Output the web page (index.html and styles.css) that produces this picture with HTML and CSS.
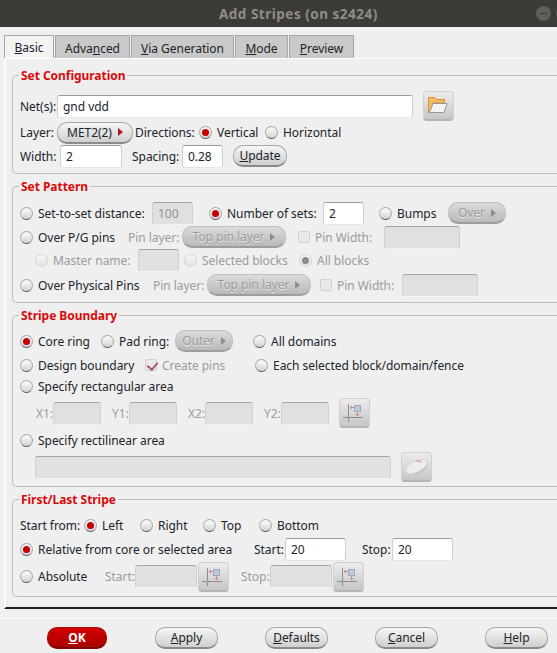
FILE: index.html
```html
<!DOCTYPE html>
<html lang="en">
<head>
    <meta charset="UTF-8">
    <meta name="viewport" content="width=device-width, initial-scale=1.0">
    <title>Add Stripes (on s2424)</title>
    <link rel="stylesheet" href="styles.css">
</head>
<body>
    <svg class="defs" width="0" height="0">
        <symbol id="ico-box" viewBox="0 0 31 30">
            <path d="M9.500 6V24M4 19.500H24" stroke="#8b8b8b" fill="none"/>
            <rect x="8" y="18" width="3" height="3" fill="#a9a9a9"/>
            <path d="M11 9.500H16M11 9.500l2-1.500M11 9.500l2 1.500M18.500 13.500V18M18.500 18l-1.500-2M18.500 18l1.500-2" stroke="#d08c8c" fill="none"/>
            <rect x="15.500" y="7.500" width="6" height="6" fill="#bcc8dc" stroke="#9aa8c0"/>
        </symbol>
    </svg>

    <div class="titlebar">
        <span class="title">Add Stripes (on s2424)</span>
        <span class="winbtn"></span>
    </div>

    <div class="tabs">
        <span class="tab active"><u>B</u>asic</span>
        <span class="tab t-adv">Adva<u>n</u>ced</span>
        <span class="tab t-via"><u>V</u>ia Generation</span>
        <span class="tab t-mode"><u>M</u>ode</span>
        <span class="tab t-prev"><u>P</u>review</span>
    </div>

    <div class="pane">
        <fieldset class="group">
            <legend>Set Configuration</legend>
            <div class="row r-net">
                <span>Net(s):</span>
                <span class="field w356">gnd vdd</span>
                <span class="iconbtn">
                    <svg width="31" height="30" viewBox="0 0 31 30">
                        <path d="M5.500 6.500h6l2 2h8v3.500H10L7 21.500H5.500z" fill="#f3bc6c" stroke="#dd8e2c"/>
                        <path d="M10 12.500h14l-3 9H6.500z" fill="#f4f4f4" stroke="#999"/>
                    </svg>
                </span>
            </div>
            <div class="row r-layer">
                <span>Layer:</span>
                <span class="btn w76">MET2(2)<i class="arrow"></i></span>
                <span>Directions:</span>
                <label class="opt"><i class="radio on"></i>Vertical</label>
                <label class="opt"><i class="radio"></i>Horizontal</label>
            </div>
            <div class="row r-width">
                <span>Width:</span>
                <span class="field w62">2</span>
                <span>Spacing:</span>
                <span class="field w41">0.28</span>
                <span class="btn w54"><u>U</u>pdate</span>
            </div>
        </fieldset>

        <fieldset class="group">
            <legend>Set Pattern</legend>
            <div class="row r-set">
                <label class="opt"><i class="radio"></i>Set-to-set distance:</label>
                <span class="field w41 off">100</span>
                <label class="opt"><i class="radio on"></i>Number of sets:</label>
                <span class="field w41">2</span>
                <label class="opt"><i class="radio"></i>Bumps</label>
                <span class="btn w58 off">Over<i class="arrow"></i></span>
            </div>
            <div class="row r-pg">
                <label class="opt"><i class="radio"></i>Over P/G pins</label>
                <span class="dim">Pin layer:</span>
                <span class="btn w104 off">Top pin layer<i class="arrow"></i></span>
                <label class="opt dim"><i class="check"></i>Pin Width:</label>
                <span class="field w76 off"></span>
            </div>
            <div class="row r-master">
                <label class="opt dim"><i class="radio"></i>Master name:</label>
                <span class="field w41 off"></span>
                <label class="opt dim"><i class="radio"></i>Selected blocks</label>
                <label class="opt dim"><i class="radio on"></i>All blocks</label>
            </div>
            <div class="row r-phys">
                <label class="opt"><i class="radio"></i>Over Physical Pins</label>
                <span class="dim">Pin layer:</span>
                <span class="btn w104 off">Top pin layer<i class="arrow"></i></span>
                <label class="opt dim"><i class="check"></i>Pin Width:</label>
                <span class="field w76 off"></span>
            </div>
        </fieldset>

        <fieldset class="group">
            <legend>Stripe Boundary</legend>
            <div class="row r-core">
                <label class="opt"><i class="radio on"></i>Core ring</label>
                <label class="opt"><i class="radio"></i>Pad ring:</label>
                <span class="btn w58 off">Outer<i class="arrow"></i></span>
                <label class="opt"><i class="radio"></i>All domains</label>
            </div>
            <div class="row r-design">
                <label class="opt"><i class="radio"></i>Design boundary</label>
                <label class="opt dim"><i class="check on"></i>Create pins</label>
                <label class="opt"><i class="radio"></i>Each selected block/domain/fence</label>
            </div>
            <div class="row r-rect">
                <label class="opt"><i class="radio"></i>Specify rectangular area</label>
            </div>
            <div class="row r-coords">
                <span class="dim">X1:</span>
                <span class="field w48 off"></span>
                <span class="dim">Y1:</span>
                <span class="field w48 off"></span>
                <span class="dim">X2:</span>
                <span class="field w48 off"></span>
                <span class="dim">Y2:</span>
                <span class="field w48 off"></span>
                <span class="iconbtn"><svg width="31" height="30"><use href="#ico-box"/></svg></span>
            </div>
            <div class="row r-rectl">
                <label class="opt"><i class="radio"></i>Specify rectilinear area</label>
            </div>
            <div class="row r-area">
                <span class="field w356 off"></span>
                <span class="iconbtn">
                    <svg width="31" height="30" viewBox="0 0 31 30">
                        <path d="M5 20c-1-4 3-9 9-11 5-2 11-2 12 1 1 4-4 8-9 10-5 2-11 3-12 0z" fill="#ececec" stroke="#d2d2d2"/>
                        <path d="M13 21.500c5-1 11-5 13-9v2c-2 4-7 7-13 8z" fill="#b7bfcd"/>
                        <path d="M15 9l6 1M18 8l1 2" stroke="#e69a9a" fill="none"/>
                    </svg>
                </span>
            </div>
        </fieldset>

        <fieldset class="group">
            <legend>First/Last Stripe</legend>
            <div class="row r-start">
                <span>Start from:</span>
                <label class="opt"><i class="radio on"></i>Left</label>
                <label class="opt"><i class="radio"></i>Right</label>
                <label class="opt"><i class="radio"></i>Top</label>
                <label class="opt"><i class="radio"></i>Bottom</label>
            </div>
            <div class="row r-rel">
                <label class="opt"><i class="radio on"></i>Relative from core or selected area</label>
                <span>Start:</span>
                <span class="field w61">20</span>
                <span>Stop:</span>
                <span class="field w61">20</span>
            </div>
            <div class="row r-abs">
                <label class="opt"><i class="radio"></i>Absolute</label>
                <span class="dim">Start:</span>
                <span class="field w62 off"></span>
                <span class="iconbtn"><svg width="31" height="30"><use href="#ico-box"/></svg></span>
                <span class="dim">Stop:</span>
                <span class="field w62 off"></span>
                <span class="iconbtn"><svg width="31" height="30"><use href="#ico-box"/></svg></span>
            </div>
        </fieldset>
    </div>

    <div class="actions">
        <span class="btn action ok"><u>O</u>K</span>
        <span class="btn action"><u>A</u>pply</span>
        <span class="btn action"><u>D</u>efaults</span>
        <span class="btn action"><u>C</u>ancel</span>
        <span class="btn action"><u>H</u>elp</span>
    </div>
</body>
</html>
```

FILE: styles.css
```css
* {
    box-sizing: border-box;
}
html, body {
    height: 100%;
}
body {
    margin: 0;
    width: 557px;
    height: 653px;
    overflow: hidden;
    background-color: #efefef;
    font-family: "Noto Sans", sans-serif;
    font-size: 12px;
    letter-spacing: -0.04px;
    color: #20242a;
}
.defs {
    display: block;
    height: 0;
}
.titlebar {
    height: 27px;
    background: #3c3b37;
    color: #8f8d87;
    font-weight: bold;
    font-size: 13.5px;
    display: flex;
    align-items: center;
    padding-left: 219px;
    white-space: nowrap;
    overflow: hidden;
}
.title {
    letter-spacing: 0.5px;
}
.winbtn {
    margin-left: auto;
    margin-right: 6px;
    width: 15px;
    height: 15px;
    border-radius: 50%;
    background: #5f5e59;
    box-shadow: 20px 0 0 #5f5e59;
    display: flex;
    align-items: center;
    justify-content: center;
}
.winbtn::after {
    content: "";
    width: 7px;
    height: 1px;
    background: #3c3b37;
}

/* tabs */
.tabs {
    display: flex;
    height: 23px;
    margin-top: 8px;
    padding-left: 4px;
    gap: 1px;
}
.tab {
    height: 23px;
    padding-top: 4px;
    text-align: center;
    background: #c9c9c9;
    border: 1px solid #a6a6a6;
    border-bottom: none;
    white-space: nowrap;
}
.tab.active {
    width: 50px;
    background: #f3f3f3;
    padding-top: 3px;
}
.t-adv { width: 75px; }
.t-via { width: 103px; }
.t-mode { width: 53px; }
.t-prev { width: 65px; }

/* page under the tabs */
.pane {
    height: 551px;
    margin-left: 4px;
    padding: 7px 0 0 6px;
    border-top: 1px solid #fff;
    border-left: 2px solid #fbfbfb;
    border-bottom: 2px solid #1d1d1d;
}
/* the right edge of the groups is cut off by the window */
.group {
    margin: 0 0 3px;
    padding: 0 0 0 7px;
    border: 1px solid #bdbdbd;
    border-right: none;
    border-radius: 5px 0 0 5px;
    min-width: 0;
}
.group legend {
    height: 18px;
    line-height: 20px;
    padding: 0 2px;
    margin-left: -1px;
    font-size: 12px;
    font-weight: bold;
    color: #d80a0a;
}
.group:nth-child(1) { padding-top: 7px; padding-bottom: 5px; }
.group:nth-child(2) { padding-top: 6px; padding-bottom: 5px; }
.group:nth-child(3) { padding-top: 5px; padding-bottom: 2px; }
.group:nth-child(4) { padding-top: 5px; padding-bottom: 4px; }

/* rows: columns follow the dialog's own alignment */
.row {
    display: grid;
    align-items: center;
    justify-items: start;
    white-space: nowrap;
    height: 24px;
}
.r-net { height: 30px; grid-template-columns: 37px 366px 31px; }
.r-layer { height: 23px; grid-template-columns: 37px 78px 64px 66px auto; }
.r-width { grid-template-columns: 40px 72px 50px 51px 54px; }
.r-set { grid-template-columns: 132px 57px 114px 56px 69px 58px; }
.r-pg { grid-template-columns: 108px 54px 116px 86px 76px; }
.r-master { padding-left: 15px; padding-bottom: 1px; grid-template-columns: 103px 46px 115px auto; }
.r-phys { grid-template-columns: 133px 54px 113px 82px 75px; }
.r-core { grid-template-columns: 81px 74px 78px auto; }
.r-design { grid-template-columns: 125px 110px auto; }
.r-rect { height: 19px; grid-template-columns: auto; }
.r-coords { height: 34px; padding-left: 16px; grid-template-columns: 17px 59px 17px 59px 17px 59px 17px 58px 31px; }
.r-rectl { height: 20px; grid-template-columns: auto; }
.r-area { height: 34px; padding-left: 15px; grid-template-columns: 366px 31px; }
.r-start { grid-template-columns: 64px 56px 63px 56px auto; }
.r-rel { grid-template-columns: 234px 31px 77px 30px 61px; }
.r-abs { height: 31px; grid-template-columns: 85px 30px 63px 43px 29px 63px 31px; }

.dim {
    color: #9b9b9b;
}
.opt {
    display: flex;
    align-items: center;
    gap: 5px;
}

/* radio + check marks */
.radio {
    flex: none;
    width: 13px;
    height: 13px;
    border-radius: 50%;
    border: 1px solid #a9a9a9;
    border-bottom-color: #555;
    background: linear-gradient(#fdfdfd, #d2d2d2);
    display: flex;
    align-items: center;
    justify-content: center;
}
.radio.on::after {
    content: "";
    width: 7px;
    height: 7px;
    border-radius: 50%;
    background: #c60000;
}
.dim .radio {
    border-color: #d2d2d2;
    background: linear-gradient(#f6f6f6, #e3e3e3);
}
.dim .radio.on::after {
    background: #8a8a8a;
}
.check {
    flex: none;
    width: 12px;
    height: 12px;
    border: 1px solid #d0d0d0;
    border-radius: 2px;
    background: #e9e9e9;
    position: relative;
}
.check.on::after {
    content: "";
    position: absolute;
    left: 3px;
    top: 0;
    width: 5px;
    height: 8px;
    border: solid #a85a62;
    border-width: 0 2px 2px 0;
    transform: rotate(40deg);
}

/* entry fields */
.field {
    display: block;
    height: 23px;
    line-height: 22px;
    padding-left: 5px;
    background: #fff;
    border: 1px solid #e4e4e4;
    border-top-color: #9a9a9a;
    border-left-color: #cfcfcf;
    border-right-color: #cfcfcf;
    border-radius: 3px;
}
.field.off {
    background: #e0e0e0;
    color: #8f8f8f;
    border-color: #f4f4f4;
    border-top-color: #a5a5a5;
    border-left-color: #d0d0d0;
    border-right-color: #d0d0d0;
}
.w41 { width: 41px; }
.w48 { width: 48px; }
.w61 { width: 61px; }
.w62 { width: 62px; }
.w76 { width: 76px; }
.w356 { width: 356px; }

/* push buttons */
.btn {
    display: flex;
    align-items: center;
    justify-content: center;
    height: 22px;
    border: 1px solid #a8a8a8;
    border-bottom: 2px solid #8b8b8b;
    border-radius: 10px;
    background: linear-gradient(#f6f6f6, #cfcfcf);
}
.btn.off {
    color: #9a9a9a;
    text-shadow: 0 1px 0 #eee;
    background: linear-gradient(#dcdcdc, #b9b9b9);
    border-color: #bdbdbd;
    border-bottom-color: #9d9d9d;
}
.w54 { width: 54px; }
.w58 { width: 58px; }
.w104 { width: 104px; }
.arrow {
    margin-left: 6px;
    border-left: 5px solid #b01818;
    border-top: 4px solid transparent;
    border-bottom: 4px solid transparent;
}
.off .arrow {
    border-left-color: #8e8e8e;
}
.iconbtn {
    display: block;
    width: 31px;
    height: 30px;
    border: 1px solid #cfcfcf;
    border-bottom: 2px solid #b5b5b5;
    border-radius: 4px;
    background: linear-gradient(#ececec, #c6c6c6);
}
.iconbtn svg {
    display: block;
    margin: -1px;
}

/* bottom button bar */
.actions {
    display: flex;
    gap: 47px;
    margin-top: 9px;
    padding: 8px 0 0 47px;
    border-top: 1px solid #fbfbfb;
}
.action {
    width: 63px;
}
.action.ok {
    width: 60px;
    margin-right: 1px;
    color: #fff;
    font-weight: bold;
    background: linear-gradient(#d40000, #a80000);
    border-color: #9c1010;
    border-bottom-color: #7d0a0a;
}
```
